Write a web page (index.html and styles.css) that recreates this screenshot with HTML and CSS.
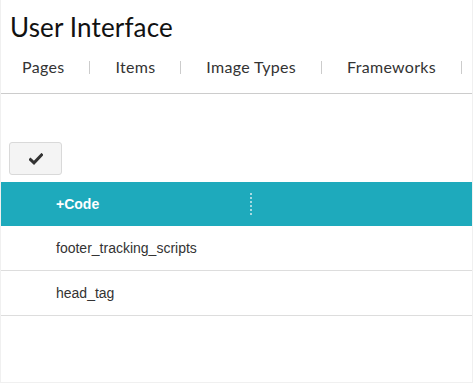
FILE: index.html
```html
<!DOCTYPE html>
<html lang="en">
<head>
    <meta charset="UTF-8">
    <meta name="viewport" content="width=device-width, initial-scale=1.0">
    <title>User Interface</title>
    <link rel="stylesheet" href="styles.css">
</head>
<body>
<div class="page">
    <h1 class="title">User Interface</h1>

    <!-- Tabs -->
    <ul class="tabs">
        <li>Pages</li>
        <li class="sep"></li>
        <li>Items</li>
        <li class="sep"></li>
        <li>Image Types</li>
        <li class="sep"></li>
        <li>Frameworks</li>
        <li class="sep"></li>
    </ul>

    <div class="toolbar">
        <button class="check-btn" type="button">
            <svg width="14" height="12" viewBox="0 0 14 12">
                <path d="M1.5 6.5 L5 9.8 L12.5 2" fill="none" stroke="#333" stroke-width="3" stroke-linecap="square"/>
            </svg>
        </button>
    </div>

    <!-- Code table -->
    <table class="grid">
        <thead>
            <tr>
                <th class="col-name"><span>+Code</span></th>
                <th></th>
            </tr>
        </thead>
        <tbody>
            <tr><td class="col-name">footer_tracking_scripts</td><td></td></tr>
            <tr><td class="col-name">head_tag</td><td></td></tr>
        </tbody>
    </table>
</div>
</body>
</html>
```

FILE: styles.css
```css
body {
    margin: 0;
    background-color: #fff;
    font-family: Lato, "Open Sans", sans-serif;
}
.page {
    width: 471px;
    height: 382px;
    border-left: 1px solid #f0f0f0;
    border-right: 1px solid #f0f0f0;
    border-bottom: 1px solid #f0f0f0;
}
.title {
    margin: 0;
    padding: 11px 0 0 9px;
    font-size: 26px;
    font-weight: normal;
    letter-spacing: 0.15px;
    line-height: 33px;
    color: #111;
}
.tabs {
    list-style: none;
    margin: 13px 0 0;
    padding: 0 0 16px 21px;
    display: flex;
    align-items: center;
    gap: 25px;
    border-bottom: 1px solid #ccc;
    font-size: 16px;
    letter-spacing: 0.3px;
    line-height: 20px;
    color: #333;
}
.tabs .sep {
    width: 1px;
    height: 13px;
    background-color: #ccc;
}
.toolbar {
    padding: 48px 0 7px 8px;
}
.check-btn {
    width: 53px;
    height: 33px;
    background-color: #f4f4f4;
    border: 1px solid #d9d9d9;
    border-radius: 3px;
    display: flex;
    align-items: center;
    justify-content: center;
    padding: 0;
}
.grid {
    width: 100%;
    border-collapse: collapse;
    font-family: "Liberation Sans", Arial, sans-serif;
    font-size: 14px;
}
.grid th {
    background-color: #1eaabc;
    color: #fff;
    font-weight: bold;
    text-align: left;
    height: 44px;
    padding: 0;
}
.grid th.col-name {
    width: 251px;
}
.grid th.col-name span {
    display: block;
    border-right: 2px dotted #a8dbe2;
    line-height: 22px;
    padding-left: 55px;
}
.grid td {
    height: 44px;
    padding: 0 0 0 55px;
    color: #333;
    border-bottom: 1px solid #ddd;
}
.grid td.col-name {
    width: 196px;
}
.grid td + td {
    padding: 0;
}
```
